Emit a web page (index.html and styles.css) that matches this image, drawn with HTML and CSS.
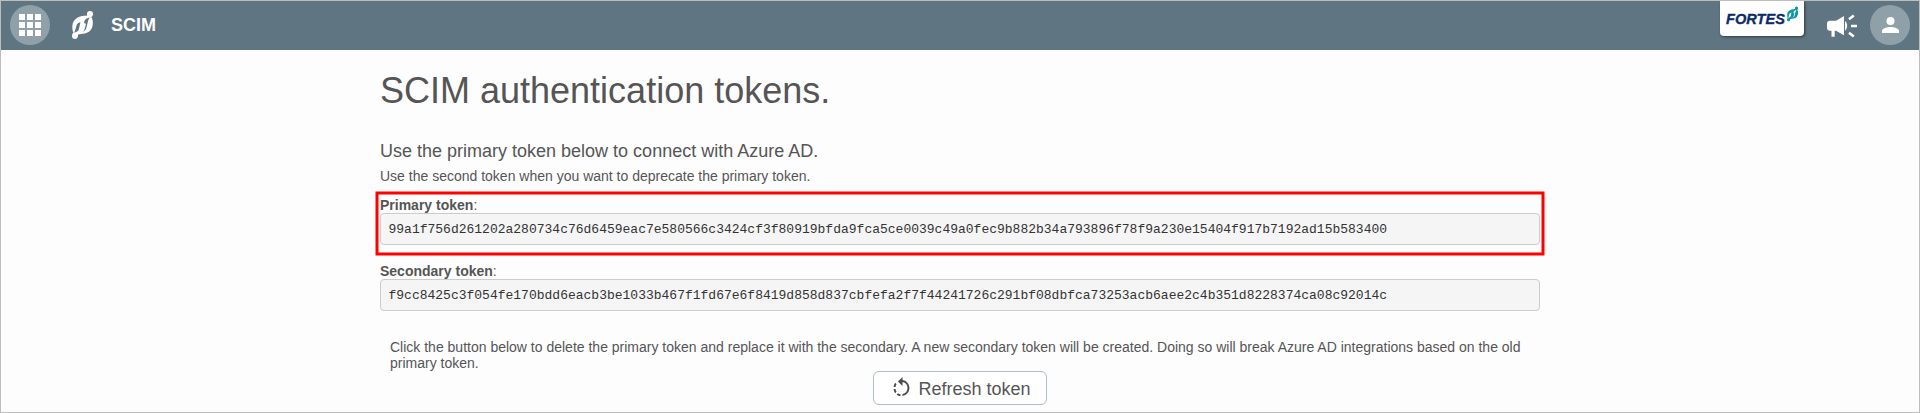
FILE: index.html
```html
<!DOCTYPE html>
<html lang="en">
<head>
<meta charset="utf-8">
<title>SCIM</title>
<link rel="stylesheet" href="styles.css">
</head>
<body>
<div class="frame">
  <header class="topbar">
    <span class="round">
      <svg width="22" height="22" viewBox="0 0 22 22" fill="#fff"><path d="M0 0h6v6H0zM8 0h6v6H8zM16 0h6v6h-6zM0 8h6v6H0zM8 8h6v6H8zM16 8h6v6h-6zM0 16h6v6H0zM8 16h6v6H8zM16 16h6v6h-6z"/></svg>
    </span>
    <svg class="mark" width="22" height="28" viewBox="0 0 22 28"><use href="#swirl" fill="#fff"/></svg>
    <span class="title">SCIM</span>
    <div class="brand">
      <svg width="84" height="35" viewBox="0 0 84 35">
        <text class="brand-name" x="6" y="22.500" textLength="59" lengthAdjust="spacingAndGlyphs">FORTES</text>
        <g transform="translate(67 5.500) scale(.53)" fill="#0d97a8">
          <path id="swirl" fill-rule="evenodd" d="M15 3A3 3 0 0 1 18 0a3 3 0 0 1 3 3c0 1.300-.6 2.400-1.600 3C20.800 8.500 21 11 20.700 14c-.5 4.500-3.200 7.300-8 8.600-2.200.6-4.700.5-6.700.9.3 2.700-1 4.500-3 4.500a3 3 0 0 1-3-3c0-1.500.6-2.500 1.500-3.200C.3 19.500.1 17 .5 14 1.100 9.800 4 6.800 8.300 5.500c2.400-.7 4.700-.5 7-.9C15.100 4.100 15 3.600 15 3zM17.800 6.500c-2.600.4-4.800 1.600-5.400 3.800l-.3 2c1-.2 1.900.3 1.700 1.400L12.300 19c-.3.900-.9 1.400-1.800 1.800 2.300-.5 3.500-2.200 4-4.300l1.300-5.500c.4-1.800 1-3.200 2-4.500zM8.500 11.200c-2 .2-3.400 1.300-4 3.300l-1.200 4.300c-.2 1-.6 1.800-1.300 2.800 2.300-.2 4.200-1.200 4.800-3L8 13.200c.2-.8.300-1.400.5-2z"/>
        </g>
      </svg>
    </div>
    <svg class="horn" width="30" height="24" viewBox="0 0 30 24" fill="#fff"><path d="M3 6.700h6l8-4.700v19.200l-8-4.500H7.700v6H4.500v-6H3a3 3 0 0 1-3-3v-4a3 3 0 0 1 3-3zM18 7c1.400 1 2.200 2.800 2.200 4.800s-.8 3.900-2.200 4.900z"/><path d="M22 5.200l4.800-3.700M24 12h6M22 18.800l4.800 3.700" stroke="#fff" stroke-width="2.600"/></svg>
    <span class="round user">
      <svg width="17" height="16" viewBox="0 0 17 16" fill="#fff"><circle cx="8.500" cy="4" r="4"/><path d="M0 16v-2c0-2.700 5.600-4 8.500-4s8.500 1.300 8.500 4v2z"/></svg>
    </span>
  </header>
  <main class="content">
    <h1>SCIM authentication tokens.</h1>
    <h4>Use the primary token below to connect with Azure AD.</h4>
    <p class="hint">Use the second token when you want to deprecate the primary token.</p>
    <section class="token">
      <div class="label"><b>Primary token</b>:</div>
      <pre>99a1f756d261202a280734c76d6459eac7e580566c3424cf3f80919bfda9fca5ce0039c49a0fec9b882b34a793896f78f9a230e15404f917b7192ad15b583400</pre>
      <svg class="highlight" width="1170" height="65"><rect x="2" y="2" width="1166" height="61" fill="none" stroke="#f00" stroke-width="3"/></svg>
    </section>
    <section class="token">
      <div class="label"><b>Secondary token</b>:</div>
      <pre>f9cc8425c3f054fe170bdd6eacb3be1033b467f1fd67e6f8419d858d837cbfefa2f7f44241726c291bf08dbfca73253acb6aee2c4b351d8228374ca08c92014c</pre>
    </section>
    <p class="note">Click the button below to delete the primary token and replace it with the secondary. A new secondary token will be created. Doing so will break Azure AD integrations based on the old primary token.</p>
    <button class="refresh" type="button">
      <svg width="24" height="24" viewBox="0 0 24 24" fill="#4c4c4c"><path d="M6.560 8.180L5.150 6.770A8 8 0 0 0 3.540 11h2.020a6 6 0 0 1 1-2.820zM5.560 13H3.540a8 8 0 0 0 1.610 4.220l1.420-1.420A6 6 0 0 1 5.560 13zm1.010 5.640A8 8 0 0 0 10.500 20.300v-2.030a6 6 0 0 1-2.490-1.060zM12.500 4.070V1L7.950 5.550 12.500 10V6.090a6 6 0 0 1 0 11.820v2.020a8 8 0 0 0 0-15.860z"/></svg>
      <span class="refresh-label">Refresh token</span>
    </button>
  </main>
</div>
</body>
</html>
```
FILE: styles.css
```css
* { box-sizing: border-box; }
body { margin: 0; font: 14px/16px "Liberation Sans", Arial, sans-serif; color: #555; }
.frame { height: 413px; border: 1px solid #bdbdbd; background: #fdfdfd; overflow: hidden; }
.topbar { display: flex; align-items: center; height: 49px; padding: 0 9px; background: #5f7682; }
.round { display: flex; align-items: center; justify-content: center; width: 40px; height: 40px; margin-top: -1px; border-radius: 50%; background: #90a0a9; }
.mark { margin: 0 0 1px 22px; }
.title { margin: -1px 0 0 17px; font-size: 18px; font-weight: bold; color: #fff; }
.brand { align-self: flex-start; width: 84px; height: 35px; margin-left: auto; border-radius: 0 0 4px 4px; background: #fff; box-shadow: 1px 1px 3px rgba(0, 0, 0, .5); }
.brand svg { display: block; }
.brand-name { font: italic bold 15.5px "Liberation Sans", Arial, sans-serif; fill: #0b2c66; stroke: #0b2c66; stroke-width: .35px; }
.horn { margin: 0 13px 0 23px; }
.content { display: flex; flex-direction: column; width: 1160px; margin: 0 auto; }
h1 { margin: 21px 0 0; font-size: 36px; line-height: 40px; font-weight: normal; }
h4 { margin: 30px 0 0; font-size: 18px; line-height: 20px; font-weight: normal; }
.hint { margin: 7px 0 0; }
.token { position: relative; margin-top: 13px; }
.token + .token { margin-top: 18px; }
.label { height: 16px; }
pre { height: 32px; margin: 0; padding: 8px 7.5px; border: 1px solid #ccc; border-radius: 4px; background: #f5f5f5; color: #333; font: 13px/15px "Liberation Mono", monospace; }
.highlight { position: absolute; left: -5px; top: -6px; }
.note { margin: 28px 0 0; padding: 0 10px; }
.refresh { display: flex; align-items: center; align-self: center; gap: 4.5px; width: 174px; height: 34px; padding: 0 0 0 16px; border: 1px solid #b0bec5; border-radius: 6px; background: #fff; color: #555; font: 18px/20px "Liberation Sans", Arial, sans-serif; }
.refresh-label { padding-top: 2px; }
```
